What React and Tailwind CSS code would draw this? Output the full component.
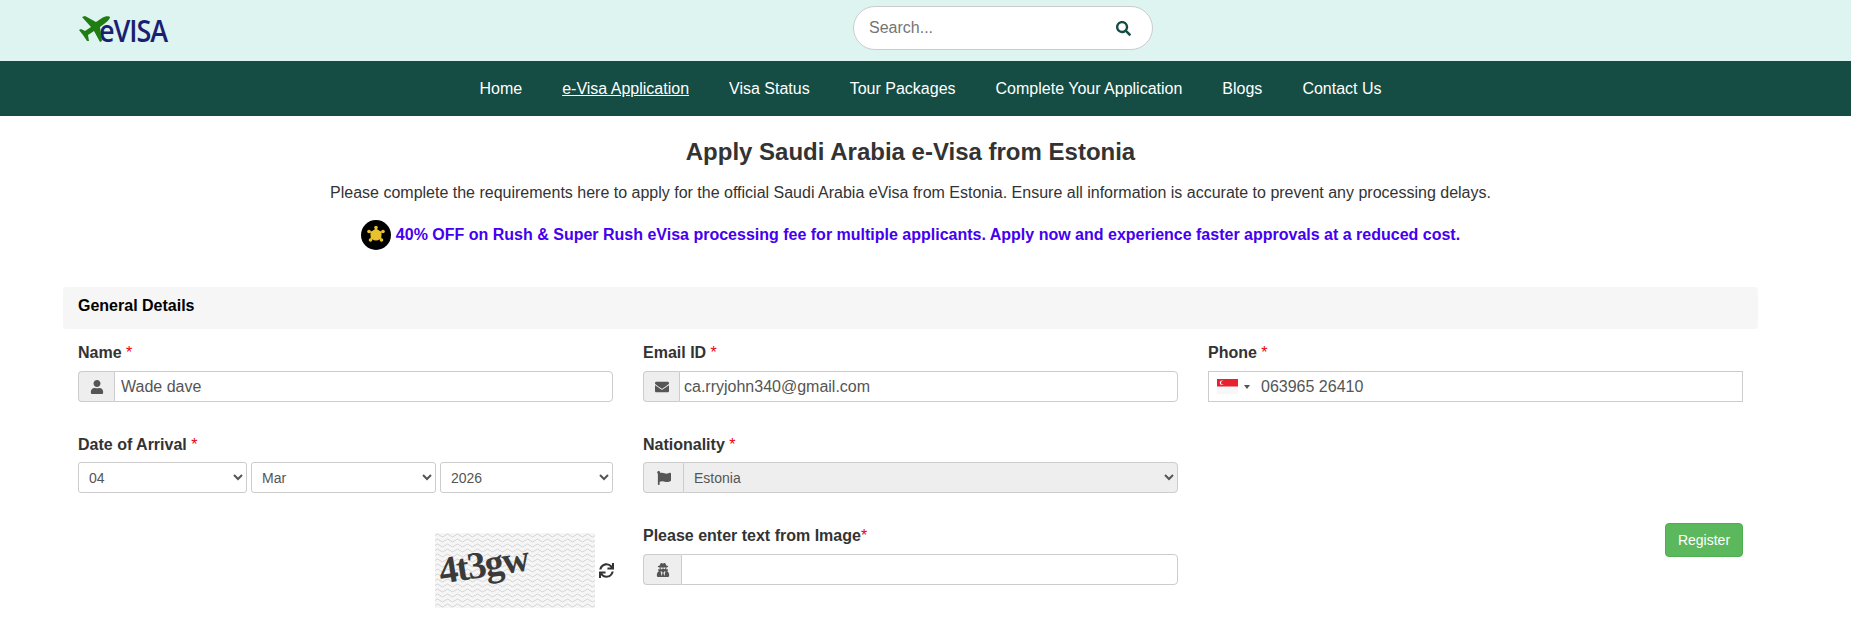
import { FaUser, FaEnvelope, FaFlag, FaSearch, FaSync, FaUserSecret } from 'react-icons/fa'

const navItems = ['Home', 'e-Visa Application', 'Visa Status', 'Tour Packages', 'Complete Your Application', 'Blogs', 'Contact Us']

function Logo() {
  return (
    <div className="relative h-[32px] w-[92px] ml-[79px]">
      <span className="absolute left-[20px] top-[-1px] font-['Open_Sans',sans-serif] font-semibold text-[30px] leading-[36px] text-[#1a1f71] tracking-[-1.2px] scale-x-90 origin-left">eVISA</span>
      <svg viewBox="0 0 32 28" className="absolute left-0 top-0 w-[32px] h-[28px]">
        <path d="M3 3 L6 2 L17 8 L23 4 C26 2 30 2 31 3 C31 5 28 8 25 10 L21 13 L23 27 L21 28 L15 17 L9 21 L10 27 L8 27 L4 21 L0 16 L2 15 L6 17 L12 13 Z" fill="#1f7d12" />
      </svg>
    </div>
  )
}

function Label({ text, tight, mb = 'mb-[8px]' }) {
  return (
    <label className={`block text-[#333] font-bold text-[16px] leading-[20px] ${mb}`}>
      {text}{tight ? '' : ' '}<span className="text-red-600 font-normal">*</span>
    </label>
  )
}

function Addon({ children, w = 'w-[36px]' }) {
  return (
    <span className={`${w} shrink-0 flex items-center justify-center bg-[#eee] border border-[#ccc] border-r-0 rounded-l-[4px] text-[#555] text-[14px]`}>
      {children}
    </span>
  )
}

function TextInput({ icon, value, pad = 'px-[6px]' }) {
  return (
    <div className="flex h-[31px]">
      <Addon>{icon}</Addon>
      <input
        readOnly
        value={value}
        className={`flex-1 min-w-0 ${pad} border border-[#ccc] rounded-r-[4px] text-[16px] text-[#555] bg-white outline-none`}
      />
    </div>
  )
}

function DateSelect({ value, className }) {
  return (
    <select defaultValue={value} className={`${className} h-[31px] pl-[6px] border border-[#ccc] rounded-[3px] text-[14px] text-[#555] bg-white appearance-auto`}>
      <option>{value}</option>
    </select>
  )
}

function Captcha() {
  return (
    <div className="flex items-center mr-[-1px]">
      <div className="relative w-[160px] h-[75px] overflow-hidden">
        <svg className="absolute inset-0 w-full h-full">
          <defs>
            <pattern id="waves" width="10" height="5" patternUnits="userSpaceOnUse">
              <path d="M0 2.5 L2.5 1 L5 2.5 L7.5 4 L10 2.5" fill="none" stroke="#d4d4d4" strokeWidth="1" />
            </pattern>
          </defs>
          <rect width="160" height="75" fill="#f6f6f6" />
          <rect width="160" height="75" fill="url(#waves)" />
        </svg>
        <span className="absolute left-[4px] top-[16px] font-['Liberation_Serif',serif] font-bold text-[38px] leading-[44px] tracking-[-1.5px] text-[#3a3a3a] -rotate-[9deg] origin-left">4t3gw</span>
      </div>
      <FaSync className="ml-[4px] w-[15px] h-[15px] text-[#333]" />
    </div>
  )
}

export default function App() {
  return (
    <div className="min-h-[641px] bg-white font-['Liberation_Sans',Arial,sans-serif] text-[#333]">
      <header className="h-[61px] bg-[#ddf4f0] relative flex items-center justify-center">
        <div className="absolute left-0 top-[14px]"><Logo /></div>
        <div className="ml-[155px] flex items-center w-[300px] h-[44px] mb-[5px] bg-white border border-[#ccc] rounded-[22px] pl-[15px] pr-[21px]">
          <span className="flex-1 text-[16px] text-[#757575]">Search...</span>
          <FaSearch className="w-[15px] h-[15px] text-[#154c43]" />
        </div>
      </header>

      <nav className="h-[55px] bg-[#154c43] flex items-center justify-center gap-[40px] pl-[10px] text-[16px] text-white">
        {navItems.map((item, i) => (
          <a key={item} className={i === 1 ? 'underline' : ''}>{item}</a>
        ))}
      </nav>

      <section className="text-center mr-[30px]">
        <h1 className="pt-[22px] text-[24px] leading-[28px] font-bold">Apply Saudi Arabia e-Visa from Estonia</h1>
        <p className="mt-[15px] text-[16px] leading-[24px]">
          Please complete the requirements here to apply for the official Saudi Arabia eVisa from Estonia. Ensure all information is accurate to prevent any processing delays.
        </p>
        <p className="mt-[15px] flex items-center justify-center gap-[5px] text-[16px] leading-[30px] font-bold text-[#4400f0]">
          <svg viewBox="0 0 30 30" className="w-[30px] h-[30px]">
            <circle cx="15" cy="15" r="15" fill="#000" />
            <circle cx="15" cy="15" r="5.5" fill="#e8c22e" />
            <g fill="#e8c22e">
              <circle cx="15" cy="7.5" r="1.8" />
              <circle cx="22" cy="11.5" r="1.8" />
              <circle cx="20.5" cy="20" r="1.8" />
              <circle cx="9.5" cy="20" r="1.8" />
              <circle cx="8" cy="11.5" r="1.8" />
              <path d="M15 8 L18 11 L21 11.5 L20 15 L20.5 19.5 L15 19 L9.5 19.5 L10 15 L9 11.5 L12 11 Z" />
            </g>
          </svg>
          40% OFF on Rush &amp; Super Rush eVisa processing fee for multiple applicants. Apply now and experience faster approvals at a reduced cost.
        </p>
      </section>

      <main className="mx-[63px] w-[1695px] mt-[37px]">
        <div className="h-[42px] bg-[#f6f6f6] rounded-[4px] px-[15px] pb-[4px] flex items-center text-[16px] font-bold text-black">General Details</div>

        <div className="grid grid-cols-3 mt-[14px]">
          <div className="px-[15px]">
            <Label text="Name" />
            <TextInput icon={<FaUser />} value="Wade dave" />
          </div>
          <div className="px-[15px]">
            <Label text="Email ID" />
            <TextInput icon={<FaEnvelope />} value="ca.rryjohn340@gmail.com" pad="px-[4px]" />
          </div>
          <div className="px-[15px]">
            <Label text="Phone" />
            <div className="flex items-center h-[31px] border border-[#ccc] bg-white text-[16px] text-[#555]">
              <svg viewBox="0 0 21 15" className="ml-[8px] w-[21px] h-[15px]">
                <rect width="21" height="15" fill="#f7f7f7" />
                <rect width="21" height="7.5" fill="#e8212f" />
                <circle cx="5" cy="3.7" r="2.2" fill="#fff" />
                <circle cx="6" cy="3.7" r="2" fill="#e8212f" />
              </svg>
              <span className="ml-[6px] w-0 h-0 border-x-[3px] border-x-transparent border-t-[4px] border-t-[#555]" />
              <span className="ml-[11px]">063965 26410</span>
            </div>
          </div>
        </div>

        <div className="grid grid-cols-3 mt-[33px]">
          <div className="px-[15px]">
            <Label text="Date of Arrival" mb="mb-[7px]" />
            <div className="flex gap-[4px]">
              <DateSelect value="04" className="w-[169px]" />
              <DateSelect value="Mar" className="w-[185px]" />
              <DateSelect value="2026" className="flex-1 min-w-0" />
            </div>
          </div>
          <div className="px-[15px]">
            <Label text="Nationality" mb="mb-[7px]" />
            <div className="flex h-[31px]">
              <Addon w="w-[40px]"><FaFlag /></Addon>
              <select defaultValue="Estonia" className="flex-1 min-w-0 pl-[6px] border border-[#ccc] rounded-r-[4px] bg-[#eee] text-[14px] text-[#555]">
                <option>Estonia</option>
              </select>
            </div>
          </div>
        </div>

        <div className="grid grid-cols-3 mt-[33px]">
          <div className="px-[15px] flex justify-end pt-[7px]">
            <Captcha />
          </div>
          <div className="px-[15px]">
            <Label text="Please enter text from Image" tight />
            <div className="flex h-[31px]">
              <Addon w="w-[38px]"><FaUserSecret /></Addon>
              <input readOnly className="flex-1 min-w-0 border border-[#ccc] rounded-r-[4px] bg-white outline-none" />
            </div>
          </div>
          <div className="px-[15px] flex justify-end items-start">
            <button className="mt-[-3px] w-[78px] h-[34px] bg-[#5cb85c] border border-[#4cae4c] rounded-[4px] text-white text-[14px]">Register</button>
          </div>
        </div>
      </main>
    </div>
  )
}
